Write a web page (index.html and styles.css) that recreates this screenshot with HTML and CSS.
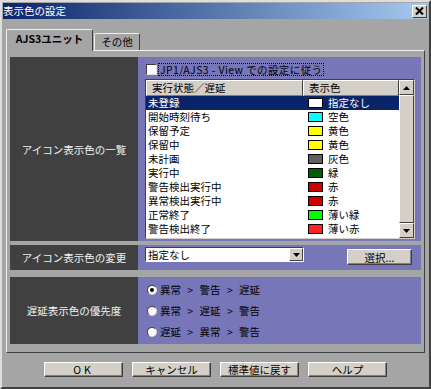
FILE: index.html
```html
<!DOCTYPE html>
<html>
<head>
    <meta charset='utf-8'>
    <title>表示色の設定</title>
    <link rel="stylesheet" href="styles.css">
</head>
<body>
<div class="window">
    <div class="titlebar">
        <span class="title">表示色の設定</span>
        <span class="close">
            <svg width="9" height="8" viewBox="0 0 9 8"><path d="M1 0.5 L8 7.5 M8 0.5 L1 7.5" stroke="#000" stroke-width="2"/></svg>
        </span>
    </div>
    <div class="client">
        <div class="tabs">
            <div class="tab active">AJS3ユニット</div>
            <div class="tab">その他</div>
        </div>
        <div class="panel">
            <!-- icon colour list -->
            <div class="row rowList">
                <div class="label">アイコン表示色の一覧</div>
                <div class="field">
                    <div class="check">
                        <span class="box"></span>
                        <span class="focus">JP1/AJS3 - View での設定に従う</span>
                    </div>
                    <div class="listview">
                        <div class="lvMain">
                            <div class="lvHead">
                                <div class="hCell col1">実行状態／遅延</div>
                                <div class="hCell col2">表示色</div>
                            </div>
                            <div class="lvRow selected"><div class="col1">未登録</div><div class="col2"><span class="swatch cWhite"></span>指定なし</div></div>
                            <div class="lvRow"><div class="col1">開始時刻待ち</div><div class="col2"><span class="swatch cSky"></span>空色</div></div>
                            <div class="lvRow"><div class="col1">保留予定</div><div class="col2"><span class="swatch cYellow"></span>黄色</div></div>
                            <div class="lvRow"><div class="col1">保留中</div><div class="col2"><span class="swatch cYellow"></span>黄色</div></div>
                            <div class="lvRow"><div class="col1">未計画</div><div class="col2"><span class="swatch cGray"></span>灰色</div></div>
                            <div class="lvRow"><div class="col1">実行中</div><div class="col2"><span class="swatch cGreen"></span>緑</div></div>
                            <div class="lvRow"><div class="col1">警告検出実行中</div><div class="col2"><span class="swatch cRed"></span>赤</div></div>
                            <div class="lvRow"><div class="col1">異常検出実行中</div><div class="col2"><span class="swatch cRed"></span>赤</div></div>
                            <div class="lvRow"><div class="col1">正常終了</div><div class="col2"><span class="swatch cLightGreen"></span>薄い緑</div></div>
                            <div class="lvRow"><div class="col1">警告検出終了</div><div class="col2"><span class="swatch cLightRed"></span>薄い赤</div></div>
                        </div>
                        <div class="scrollbar">
                            <div class="sbBtn">
                                <svg width="7" height="4" viewBox="0 0 7 4"><path d="M3.5 0 L7 4 L0 4 Z" fill="#000"/></svg>
                            </div>
                            <div class="sbThumb"></div>
                            <div class="sbBtn">
                                <svg width="7" height="4" viewBox="0 0 7 4"><path d="M0 0 L7 0 L3.5 4 Z" fill="#000"/></svg>
                            </div>
                        </div>
                    </div>
                </div>
            </div>

            <!-- icon colour change -->
            <div class="row rowChange">
                <div class="label">アイコン表示色の変更</div>
                <div class="field fieldChange">
                    <div class="combo">
                        <span class="comboText">指定なし</span>
                        <span class="comboBtn">
                            <svg width="7" height="4" viewBox="0 0 7 4"><path d="M0 0 L7 0 L3.5 4 Z" fill="#000"/></svg>
                        </span>
                    </div>
                    <div class="btn btnSelect">選択...</div>
                </div>
            </div>

            <!-- delay priority -->
            <div class="row rowPriority">
                <div class="label">遅延表示色の優先度</div>
                <div class="field fieldRadio">
                    <div class="radio"><span class="dot on"></span>異常 &gt; 警告 &gt; 遅延</div>
                    <div class="radio"><span class="dot"></span>異常 &gt; 遅延 &gt; 警告</div>
                    <div class="radio"><span class="dot"></span>遅延 &gt; 異常 &gt; 警告</div>
                </div>
            </div>
        </div>

        <div class="buttons">
            <div class="btn btnOk">OK</div>
            <div class="btn">キャンセル</div>
            <div class="btn">標準値に戻す</div>
            <div class="btn">ヘルプ</div>
        </div>
    </div>
</div>
</body>
</html>
```

FILE: styles.css
```css
* {
    box-sizing: border-box;
}

html, body {
    margin: 0;
    padding: 0;
}

body {
    width: 431px;
    height: 389px;
    overflow: hidden;
    font-family: "Noto Sans CJK JP", "Noto Sans", sans-serif;
    font-size: 10.5px;
    color: #000;
}

.window {
    width: 431px;
    height: 389px;
    display: flex;
    flex-direction: column;
    background-color: #a5a5a5;
    border: 2px solid;
    border-color: #dedede #404040 #404040 #dedede;
    padding: 1px;
}

.titlebar {
    height: 16px;
    display: flex;
    align-items: center;
    justify-content: space-between;
    padding: 0 1px 0 0;
    color: #fff;
    background: linear-gradient(to right, #0a246a, #a6caf0);
}

.title {
    line-height: 16px;
}

.close {
    width: 15px;
    height: 13px;
    display: flex;
    align-items: center;
    justify-content: center;
    background-color: #d4d0c8;
    border: 1px solid;
    border-color: #fff #404040 #404040 #fff;
}

.client {
    flex: 1;
    padding: 10px 3px 0 3px;
}

/* tabs */
.tabs {
    height: 21px;
    display: flex;
    align-items: flex-end;
}

.tab {
    height: 17px;
    width: 46px;
    margin-left: 1px;
    text-align: center;
    line-height: 15px;
    border: 1px solid;
    border-bottom: none;
    border-color: #f0f0f0 #404040 #404040 #f0f0f0;
    border-radius: 2px 2px 0 0;
    background-color: #a5a5a5;
}

.tab.active {
    position: relative;
    z-index: 2;
    height: 22px;
    width: 87px;
    margin-left: 0;
    margin-bottom: -1px;
    line-height: 18px;
    font-weight: bold;
}

.panel {
    height: 303px;
    border: 1px solid;
    border-color: #f0f0f0 #404040 #404040 #f0f0f0;
    padding: 6px 3px 0 3px;
}

/* rows */
.row {
    display: grid;
    grid-template-columns: 128px 1fr;
}

.rowList {
    height: 184px;
}

.rowChange {
    height: 25px;
    margin-top: 4px;
}

.rowPriority {
    height: 67px;
    margin-top: 7px;
}

.label {
    display: flex;
    align-items: center;
    justify-content: center;
    background-color: #404040;
    color: #f0f0f0;
}

.field {
    background-color: #7676b9;
    padding: 6px 0 0 7px;
}

/* checkbox */
.check {
    height: 13px;
    display: flex;
    align-items: center;
    margin-left: 1px;
}

.box {
    width: 11px;
    height: 11px;
    background-color: #fff;
    border: 1px solid;
    border-color: #404040 #e0e0e0 #e0e0e0 #404040;
    margin-right: 1px;
}

.focus {
    border: 1px dotted #000;
    line-height: 11px;
    padding: 0 1px;
    letter-spacing: 0.4px;
}

/* list view */
.listview {
    width: 270px;
    height: 160px;
    margin-top: 3px;
    display: flex;
    background-color: #fff;
    border: 1px solid;
    border-color: #404040 #d4d0c8 #d4d0c8 #404040;
}

.lvMain {
    width: 253px;
    overflow: hidden;
}

.lvHead {
    display: flex;
    height: 16px;
}

.hCell {
    background-color: #d4d0c8;
    border: 1px solid;
    border-color: #fff #404040 #808080 #fff;
    line-height: 13px;
    padding-left: 5px;
}

.col1 {
    width: 157px;
}

.col2 {
    width: 96px;
}

.lvRow {
    display: flex;
    height: 14px;
    line-height: 14px;
}

.lvRow .col1 {
    padding-left: 2px;
}

.lvRow .col2 {
    display: flex;
    align-items: center;
    padding-left: 5px;
}

.lvRow.selected {
    background-color: #0a246a;
    color: #fff;
}

.swatch {
    width: 15px;
    height: 10px;
    margin-right: 5px;
    border: 1px solid #000;
}

.cWhite { background-color: #fff; }
.cSky { background-color: #00ffff; }
.cYellow { background-color: #ffff00; }
.cGray { background-color: #606060; }
.cGreen { background-color: #006000; }
.cRed { background-color: #d00000; }
.cLightGreen { background-color: #00ff00; }
.cLightRed { background-color: #ff2020; }

.scrollbar {
    width: 15px;
    display: flex;
    flex-direction: column;
    background-color: #d4d0c8;
}

.sbBtn, .sbThumb {
    display: flex;
    align-items: center;
    justify-content: center;
    background-color: #d4d0c8;
    border: 1px solid;
    border-color: #fff #404040 #404040 #fff;
}

.sbBtn {
    height: 15px;
}

.sbThumb {
    flex: 1;
}

/* combo + select button */
.fieldChange {
    display: flex;
    align-items: flex-start;
    padding-top: 2px;
}

.combo {
    width: 159px;
    height: 15px;
    display: flex;
    align-items: center;
    justify-content: space-between;
    background-color: #fff;
    border: 1px solid;
    border-color: #404040 #fff #fff #404040;
    padding: 0 0 0 2px;
}

.comboText {
    line-height: 13px;
}

.comboBtn {
    width: 14px;
    height: 13px;
    display: flex;
    align-items: center;
    justify-content: center;
    background-color: #d4d0c8;
    border: 1px solid;
    border-color: #fff #404040 #404040 #fff;
}

.btn {
    width: 79px;
    height: 15px;
    display: flex;
    align-items: center;
    justify-content: center;
    background-color: #d4d0c8;
    border: 1px solid;
    border-color: #fff #404040 #404040 #fff;
    box-shadow: inset -1px -1px 0 #808080;
}

.btnSelect {
    width: 65px;
    height: 16px;
    margin: 2px 0 0 43px;
}

.btnOk {
    letter-spacing: 3px;
}

/* radio buttons */
.fieldRadio {
    display: flex;
    flex-direction: column;
    justify-content: center;
    gap: 7px;
    padding: 0 0 0 9px;
}

.radio {
    height: 14px;
    display: flex;
    align-items: center;
    word-spacing: 4px;
}

.dot {
    width: 10px;
    height: 10px;
    margin-right: 3px;
    display: flex;
    align-items: center;
    justify-content: center;
    border-radius: 50%;
    background-color: #fff;
    border: 1px solid;
    border-color: #404040 #d4d0c8 #d4d0c8 #404040;
}

.dot.on::after {
    content: "";
    width: 4px;
    height: 4px;
    border-radius: 50%;
    background-color: #000;
}

.buttons {
    display: flex;
    justify-content: center;
    gap: 9px;
    margin-top: 9px;
}
```
